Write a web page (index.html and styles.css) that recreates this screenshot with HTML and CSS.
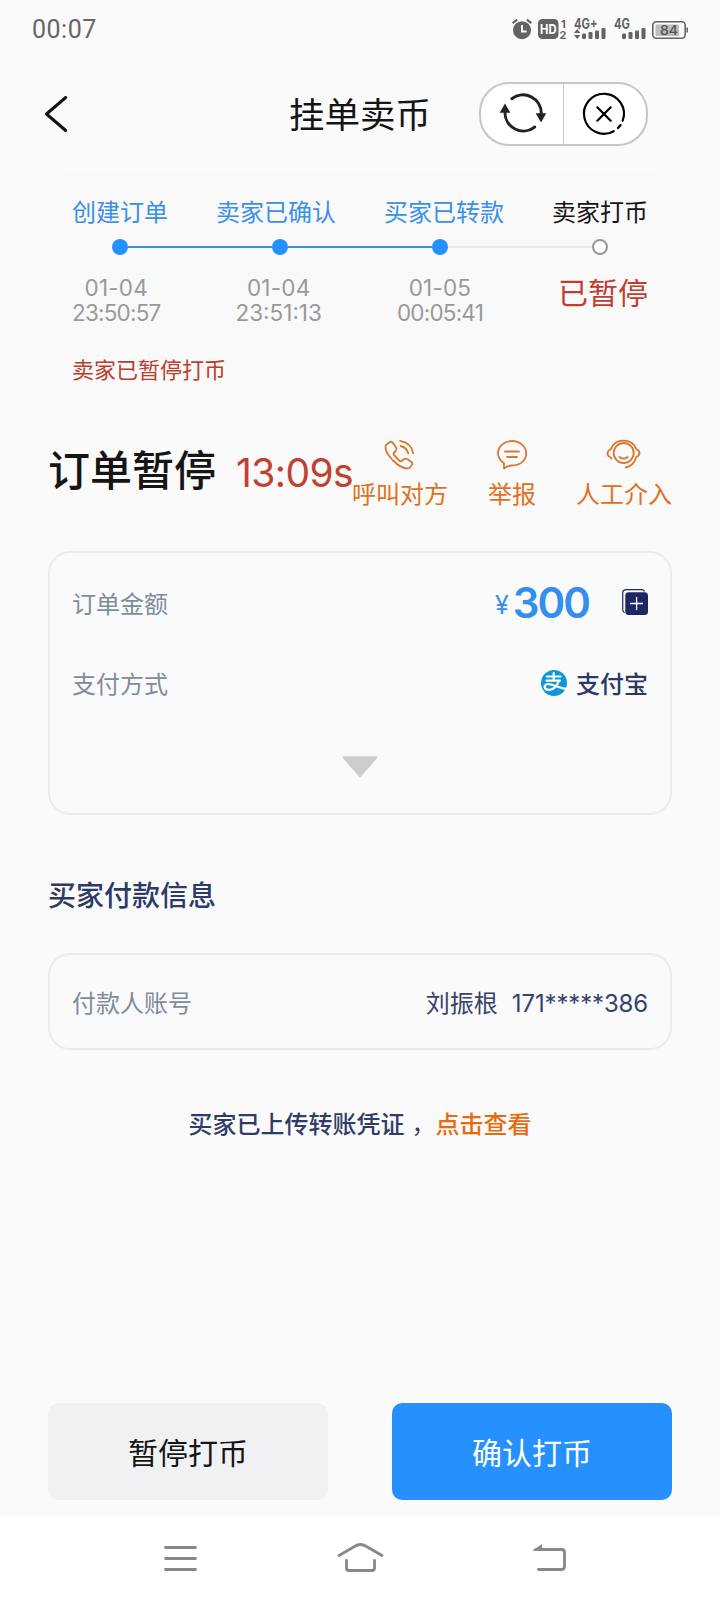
FILE: index.html
```html
<!DOCTYPE html>
<html lang="zh-CN">
<head>
<meta charset="utf-8">
<title>挂单卖币</title>
<link rel="stylesheet" href="styles.css">
</head>
<body>
<div class="screen">
  <header class="status">
    <span class="clock">00:07</span>
    <svg class="status-icons" viewBox="508 14 184 30" width="184" height="30">
      <g fill="#636363" stroke="none">
        <circle cx="522" cy="30.2" r="9"/>
        <path d="M512.6 23.2l4.6-3.6M531.4 23.2l-4.6-3.6" stroke="#636363" stroke-width="2.2"/>
        <path d="M522 25v6.6h4.6" fill="none" stroke="#fff" stroke-width="2"/>
        <rect x="538" y="19" width="20.500" height="20" rx="4.500"/>
        <text x="540" y="33.500" class="st-hd" textLength="16.500" lengthAdjust="spacingAndGlyphs">HD</text>
        <text x="561" y="27.500" class="st-num">1</text>
        <text x="559.500" y="39" class="st-num">2</text>
        <text x="574" y="28.500" class="st-net" textLength="23.500" lengthAdjust="spacingAndGlyphs">4G+</text>
        <text x="614" y="28.500" class="st-net" textLength="16" lengthAdjust="spacingAndGlyphs">4G</text>
        <path d="M574 33l3.200-4 3.200 4zM574 35l3.200 4 3.200-4z"/>
        <rect x="582" y="33.500" width="4" height="5.500" rx="1.200"/><rect x="588.500" y="32" width="4" height="7" rx="1.200"/><rect x="595" y="30.500" width="4" height="8.500" rx="1.200"/><rect x="601.500" y="28" width="4" height="11" rx="1.200"/>
        <rect x="622" y="33.500" width="4" height="5.500" rx="1.200"/><rect x="628.500" y="32" width="4" height="7" rx="1.200"/><rect x="635" y="30.500" width="4" height="8.500" rx="1.200"/><rect x="641.500" y="28" width="4" height="11" rx="1.200"/>
        <rect x="652.800" y="21.800" width="32.400" height="16.400" rx="3.500" fill="none" stroke="#636363" stroke-width="1.600"/>
        <rect x="655.500" y="24.500" width="23.500" height="11.500" rx="1" fill="#bdbdbd"/>
        <rect x="686.500" y="27.500" width="1.500" height="5"/>
        <text x="660" y="35" class="st-bat" textLength="18" lengthAdjust="spacingAndGlyphs">84</text>
      </g>
    </svg>
  </header>

  <nav class="topbar">
    <svg class="back" viewBox="44 94 26 40" width="26" height="40"><path d="M65.700 97.500L46.500 114l19.200 16.500" fill="none" stroke="#111" stroke-width="3" stroke-linecap="round" stroke-linejoin="round"/></svg>
    <h1 class="title">挂单卖币</h1>
    <div class="capsule">
      <div class="capsule-cell">
        <svg viewBox="496 90 52 48" width="52" height="48">
          <g fill="none" stroke="#222" stroke-width="3" stroke-linecap="round"><path d="M511.800 98.700A18.300 18.300 0 0 1 541.300 113.500"/><path d="M534.700 127A18.300 18.300 0 0 1 505 113"/></g>
          <path d="M535.700 113.200h10.600l-5.300 9.300zM499.700 112.800h10.600l-5.300-9.300z" fill="#222"/>
        </svg>
      </div>
      <div class="capsule-cell">
        <svg viewBox="579 90 52 48" width="52" height="48"><g fill="none" stroke="#000" stroke-width="2.200" stroke-linecap="round"><path d="M613.700 131.200A20 20 0 1 1 622.700 120.700"/><path d="M618 128l2.600-3"/><path d="M597.300 107.300l13.400 13.400M610.700 107.300l-13.400 13.400"/></g></svg>
      </div>
    </div>
  </nav>

  <main class="content">
    <section class="steps">
      <div class="step-labels"><span>创建订单</span><span>卖家已确认</span><span>买家已转款</span><span class="pending">卖家打币</span></div>
      <div class="track">
        <i class="dot"></i><i class="bar"></i><i class="dot"></i><i class="bar"></i><i class="dot"></i><i class="bar bar-off"></i><i class="dot dot-off"></i>
      </div>
      <div class="step-times">
        <time><span class="day">01-04</span><br>23:50:57</time><time class="wide"><span class="day">01-04</span><br>23:51:13</time><time><span class="day">01-05</span><br>00:05:41</time><strong class="paused">已暂停</strong>
      </div>
      <p class="notice">卖家已暂停打币</p>
    </section>

    <section class="summary">
      <h2 class="state">订单暂停</h2>
      <span class="timer">13:09s</span>
      <div class="actions">
        <a class="action">
          <svg viewBox="383 438 34 33" width="34" height="33"><g fill="none" stroke="#d97732" stroke-width="1.800" stroke-linecap="round" stroke-linejoin="round"><path d="M386.500 444.500L390 442q1.800-.8 3 1l3.200 4.800q1 1.700-.4 3.200l-2 2q-.6.800.1 2l5.700 5.900q1.200.7 2 .1l2.300-1.800q1.500-1.200 3.200-.1l4.300 2.900q1.700 1.300.5 3l-1.800 2.300q-1.200 1.200-3.500 1.200-5.800-.4-13.600-8-7.200-7.500-7.500-13 .1-2.300 1-3z"/><path d="M400 440.800q11.500 2 13.200 12.500M400.500 446q6.300 1.500 7.800 7.500"/></g></svg>
          <span>呼叫对方</span>
        </a>
        <a class="action">
          <svg viewBox="495 438 34 33" width="34" height="33"><g fill="none" stroke="#d97732" stroke-width="1.800" stroke-linecap="round" stroke-linejoin="round"><path d="M504 468.500v-5.300c-3.500-2.500-6-5.500-6-9.700 0-7 6-12.500 14-12.500s14.200 5.500 14.200 12.500S520 465.500 512 465.500q-4 0-8 3z"/><path d="M505 451.500h14M507 457h10"/></g></svg>
          <span>举报</span>
        </a>
        <a class="action">
          <svg viewBox="606 438 36 33" width="36" height="33"><g fill="none" stroke="#d97732" stroke-width="1.800" stroke-linecap="round"><circle cx="623.700" cy="453" r="10"/><path d="M611.500 458.500q-.8-1.500-2.500-2-1.500-1-1.500-3 0-3 3.500-4.500c2-5.500 6.500-8.300 12.500-8.300s10.700 2.800 12.700 8.300q3.300 1.500 3.300 4t-3.300 4.200c-1.500 5.500-5 9-10.500 10.300"/><path d="M619.500 457q4 3.300 8.200 0"/></g></svg>
          <span>人工介入</span>
        </a>
      </div>
    </section>

    <section class="card order">
      <div class="row">
        <span class="label">订单金额</span>
        <span class="amount"><span class="yen">¥</span><b>300</b></span>
        <svg class="copy" viewBox="622 589 26 26" width="26" height="26"><rect x="622.700" y="589.700" width="22" height="23" rx="3.500" fill="none" stroke="#1f2763" stroke-width="1.200"/><rect x="624.500" y="591.500" width="24" height="24" rx="4" fill="#fafafa"/><rect x="625.300" y="592.300" width="22.700" height="22.700" rx="3.500" fill="#1f2763"/><path d="M636.600 597v13M630 603.500h13" stroke="#fff" stroke-width="1.300"/></svg>
      </div>
      <div class="row">
        <span class="label">支付方式</span>
        <svg class="alipay" viewBox="0 0 26 26" width="26" height="26"><circle cx="13" cy="13" r="13" fill="#1296db"/><g fill="none" stroke="#fff" stroke-width="2.200" stroke-linecap="round"><path d="M6 6.500h13.500M12.700 3.200v7M5.500 10.600h13.500"/><path d="M17.800 10.800c-1.300 4.600-4.800 8.700-9.300 9-5.700.2-6.700-5.300-1.500-5.800 4-.3 9.500 3.700 18 4.800"/></g></svg>
        <span class="method">支付宝</span>
      </div>
      <svg class="expand" viewBox="342 755 36 24" width="36" height="24"><path d="M344 757.500h32L360 776z" fill="#ccc" stroke="#ccc" stroke-width="2.500" stroke-linejoin="round"/></svg>
    </section>

    <h3 class="heading">买家付款信息</h3>

    <section class="card payer">
      <span class="label">付款人账号</span>
      <span class="payer-name">刘振根</span><span class="payer-no">171*****386</span>
    </section>

    <p class="proof"><span>买家已上传转账凭证</span><span class="comma">，</span><a>点击查看</a></p>

    <div class="buttons"><button class="btn">暂停打币</button><button class="btn btn-primary">确认打币</button></div>
  </main>

  <footer class="sysnav">
    <svg viewBox="0 1516 720 84" width="720" height="84"><g fill="none" stroke="#888" stroke-width="2.800" stroke-linecap="round" stroke-linejoin="round"><path d="M165.500 1547.500h30M165.500 1558.500h30M165.500 1569.500h30"/><path d="M339 1555.500l15.500-9q3-2 6-2t6 2l15.500 9M346.500 1560.500v7.500q0 2.500 2.500 2.500h23q2.500 0 2.500-2.500v-7.500"/><path d="M536 1549.500h25.500q3 0 3 3v14q0 3-3 3H538.500"/></g><path d="M532 1550.700l10-6.700v6.700z" fill="#888"/></svg>
  </footer>
</div>
</body>
</html>
```
FILE: styles.css
```css
* { box-sizing: border-box; }
body, h1, h2, h3, p { margin: 0; }
body {
  background: #fafafa;
  color: #151515;
  font-family: "Noto Sans CJK SC", sans-serif;
  font-size: 24px;
}
svg { display: block; flex: none; }
.screen { width: 720px; height: 1600px; display: flex; flex-direction: column; overflow: hidden; }

.status { height: 60px; padding: 0 28px 0 32px; display: flex; align-items: center; justify-content: space-between; }
.clock { font: 25px/30px Roboto, sans-serif; letter-spacing: 0.5px; color: #666; }
.status-icons { margin-top: -2px; }
.st-hd { font: 700 13px Inter, sans-serif; fill: #fff; }
.st-num { font: 700 11px Inter, sans-serif; }
.st-net { font: 700 14px Inter, sans-serif; }
.st-bat { font: 500 13px Inter, sans-serif; fill: #555; }

.topbar { height: 112px; padding: 22px 72px 26px 44px; display: grid; grid-template-columns: 204px 224px 1fr; align-items: center; }
.title { margin-top: -2px; font-size: 35.500px; font-weight: 400; line-height: 60px; text-align: center; }
.capsule { justify-self: end; width: 169px; height: 64px; display: flex; border: 2px solid #c6c6c6; border-radius: 30px; background: #fff; }
.capsule-cell { flex: 1; display: flex; align-items: center; justify-content: center; }
.capsule-cell + .capsule-cell { border-left: 1px solid #c6c6c6; }

.content { flex: 1; padding: 0 48px; display: flex; flex-direction: column; }
.steps { height: 235px; padding: 24px 24px 0; background: #f9f9f9; border-radius: 20px; }
.step-labels { display: flex; justify-content: space-between; color: #3a8fe6; line-height: 30px; }
.pending { color: #151515; }
.track { display: flex; align-items: center; margin: 13px 40px 0; height: 16px; }
.dot { width: 16px; height: 16px; border-radius: 50%; background: #2690ff; }
.dot-off { background: #fff; border: 2px solid #999; }
.bar { flex: 1; height: 2px; background: #3a8fe6; }
.bar-off { background: #ebebeb; }
.step-times { display: flex; justify-content: space-between; margin-top: 20px; height: 50px; }
.step-times time { font: 22.500px/25px Inter, sans-serif; letter-spacing: -0.8px; text-align: center; color: #999; }
.step-times .wide { letter-spacing: 0; }
.step-times .day { letter-spacing: 0.2px; }
.paused { font-size: 30px; font-weight: 400; line-height: 32px; color: #c13d2f; }
.notice { margin-top: 28px; font-size: 22px; line-height: 30px; color: #b9402f; }

.summary { height: 144px; padding-top: 31px; display: flex; align-items: flex-start; }
.state { flex: none; font-size: 42px; font-weight: 500; line-height: 60px; white-space: nowrap; }
.timer { flex: none; width: 116px; margin: 2px 0 0 20px; font: 39px/66px Inter, sans-serif; letter-spacing: -0.6px; color: #c0412f; white-space: nowrap; }
.actions { flex: none; margin-left: auto; display: flex; gap: 40px; color: #e0701e; }
.action { display: flex; flex-direction: column; align-items: center; gap: 7px; white-space: nowrap; line-height: 30px; }

.card { border: 2px solid #ebebeb; border-radius: 22px; padding: 0 22px; }
.order { height: 264px; padding-top: 10px; }
.row { height: 80px; display: flex; align-items: center; }
.label { margin-right: auto; line-height: 30px; color: #7f8c9c; }
.amount { margin: 6px 33px 0 0; display: flex; align-items: baseline; color: #338eee; font-family: Inter, sans-serif; gap: 4px; line-height: 50px; }
.yen { position: relative; top: -4px; font-size: 25px; font-weight: 400; }
.amount b { font-size: 42px; font-weight: 600; letter-spacing: -2px; }
.copy { margin-top: -2px; }
.alipay { margin-top: -1px; }
.method { margin-left: 9px; font-weight: 500; line-height: 30px; color: #2c3767; }
.expand { margin: 32px auto 0; }

.heading { margin-top: 59px; font-size: 28px; font-weight: 500; line-height: 40px; color: #2c3a68; }
.payer { margin-top: 39px; height: 97px; display: flex; align-items: center; color: #35426f; }
.payer-name { margin-right: 14px; }
.payer-no { margin-top: 3px; font-family: Inter, sans-serif; letter-spacing: -0.15px; }

.proof { margin-top: 58px; display: flex; justify-content: center; font-weight: 500; line-height: 30px; color: #303c68; }
.comma { width: 24px; margin-left: 7px; font-weight: 400; }
.proof a { color: #e86a10; }

.buttons { margin-top: auto; margin-bottom: 16px; display: flex; justify-content: space-between; }
.btn { width: 280px; height: 97px; border: 0; border-radius: 10px; background: #eff1f3; color: #151515; font: 30px/40px "Noto Sans CJK SC", sans-serif; padding: 0 0 2px; }
.btn-primary { background: #2690ff; color: #fff; }

.sysnav { height: 84px; background: #fff; }
```
